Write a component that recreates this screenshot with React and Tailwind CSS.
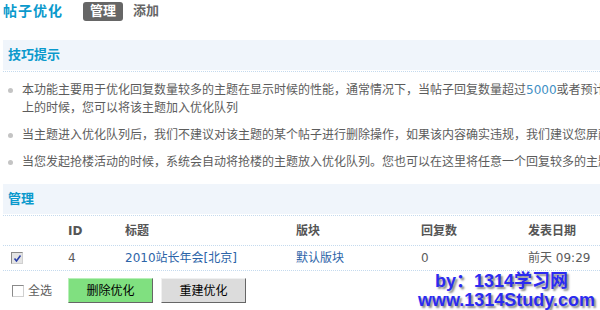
import React from 'react'

const font = "font-['DejaVu_Sans','Noto_Sans_CJK_SC',sans-serif]"

const tips = [
  ['本功能主要用于优化回复数量较多的主题在显示时候的性能，通常情况下，当帖子回复数量超过', '5000', '或者预计会超过5000以', '上的时候，您可以将该主题加入优化队列'],
  ['当主题进入优化队列后，我们不建议对该主题的某个帖子进行删除操作，如果该内容确实违规，我们建议您屏蔽该帖子'],
  ['当您发起抢楼活动的时候，系统会自动将抢楼的主题放入优化队列。您也可以在这里将任意一个回复较多的主题加入优化队列'],
]

function SectionHead({children}){
  return (
    <div className="ml-[3px] pb-[1px] border-b border-dotted border-[#c4daee]">
      <div className="h-[30px] bg-[#f0f5fb] flex items-center pl-[5px] text-[13px] font-bold text-[#0a99cc]">{children}</div>
    </div>
  )
}

function Check({checked}){
  return (
    <span className={"inline-flex w-[12px] h-[12px] items-center justify-center border border-[#8a8a8a] border-r-[#d0d0d0] border-b-[#d0d0d0] " + (checked ? 'bg-[#e4e4e4]' : 'bg-white')}>
      {checked && (
        <svg width="9" height="9" viewBox="0 0 9 9">
          <path d="M1.5 4.5 L3.5 7 L7.5 1.5" fill="none" stroke="#2a3fa8" strokeWidth="1.6" />
        </svg>
      )}
    </span>
  )
}

const cols = "grid grid-cols-[65px_57px_171px_125px_107px_1fr] ml-[3px]"

export default function App(){
  return (
    <div className={"relative w-[600px] h-[310px] overflow-hidden bg-white text-[12px] text-[#5c5c5c] " + font}>
      <div className="w-[1000px]">
        <div className="h-[22px] flex items-center pl-[3px]">
          <span className="text-[14px] font-bold text-[#0a99cc] tracking-[1px]">帖子优化</span>
          <span className="ml-[20px] h-[19px] px-[7px] rounded-[3px] bg-[#666] text-white font-bold text-[13px] flex items-center">管理</span>
          <span className="ml-[10px] font-bold text-[13px] text-[#666]">添加</span>
        </div>

        <div className="mt-[18px]">
          <SectionHead>技巧提示</SectionHead>
        </div>

        <ul className="mt-[9px] leading-[18px]">
          {tips.map((t, i) => (
            <li key={i} className="flex mb-[9px]">
              <span className="ml-[8px] mt-[7px] w-[5px] h-[5px] rounded-full bg-[#c4c4c4] shrink-0" />
              {t.length > 1 ? (
                <div className="ml-[9px]">
                  <div className="whitespace-nowrap">{t[0]}<span className="text-[#3f8fc4]">{t[1]}</span>{t[2]}</div>
                  <div>{t[3]}</div>
                </div>
              ) : (
                <div className="ml-[9px] whitespace-nowrap">{t[0]}</div>
              )}
            </li>
          ))}
        </ul>

        <div className="mt-[13px]">
          <SectionHead>管理</SectionHead>
        </div>

        <div className={cols + " h-[30px] items-center font-bold text-[#555] border-b border-dotted border-[#c4daee]"}>
          <div />
          <div>ID</div>
          <div>标题</div>
          <div>版块</div>
          <div>回复数</div>
          <div>发表日期</div>
        </div>
        <div className={cols + " h-[25px] items-center border-b border-dotted border-[#c4daee]"}>
          <div className="pl-[8px] flex"><Check checked /></div>
          <div>4</div>
          <div className="text-[#2c64a8]">2010站长年会[北京]</div>
          <div className="text-[#2c64a8]">默认版块</div>
          <div>0</div>
          <div>前天 09:29</div>
        </div>

        <div className="mt-[7px] ml-[12px] flex items-center">
          <Check />
          <span className="ml-[4px]">全选</span>
          <button className="ml-[16px] w-[85px] h-[25px] bg-[#80e080] border border-[#b8f0b8] border-r-[#666] border-b-[#666] text-black text-[12px]">删除优化</button>
          <button className="ml-[8px] w-[85px] h-[25px] bg-[#dcdcdc] border border-[#f0f0f0] border-r-[#666] border-b-[#666] text-black text-[12px]">重建优化</button>
        </div>
      </div>

      <div className="absolute right-[5px] bottom-0 flex flex-col items-end font-['Liberation_Sans','Noto_Sans_CJK_SC',sans-serif] font-bold text-[18px] leading-[19px] text-[#2b2bf0] [text-shadow:2px_2px_2px_#8a8a8a]">
        <div className="mr-[27px]">by：1314学习网</div>
        <div>www.1314Study.com</div>
      </div>
    </div>
  )
}
